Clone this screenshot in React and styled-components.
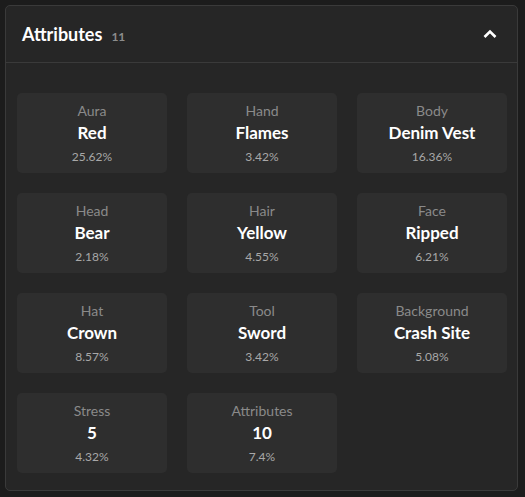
import styled, { createGlobalStyle } from "styled-components";

const GlobalStyle = createGlobalStyle`
  html, body {
    margin: 0;
    padding: 0;
    background: #1c1c1c;
    font-family: "Lato", "Noto Sans", sans-serif;
  }
`;

const Page = styled.div`
  padding: 5px 7px 4px 5px;
`;

const Panel = styled.section`
  background: #262626;
  border: 1px solid #3a3a3a;
  border-radius: 5px;
  height: 486px;
  box-sizing: border-box;
`;

const Header = styled.header`
  display: flex;
  align-items: center;
  justify-content: space-between;
  height: 56px;
  padding: 0 20px 0 16px;
  border-bottom: 1px solid #3a3a3a;
`;

const Title = styled.h2`
  margin: 0;
  display: flex;
  align-items: baseline;
  gap: 9px;
  font-size: 18px;
  font-weight: 700;
  color: #ffffff;
  margin-top: -1px;
`;

const Count = styled.span`
  font-size: 12px;
  font-weight: 700;
  color: #8c8c8c;
`;

const Toggle = styled.button`
  border: none;
  background: transparent;
  padding: 0;
  display: flex;
  cursor: pointer;
`;

const Grid = styled.div`
  display: grid;
  grid-template-columns: repeat(3, 150px);
  grid-auto-rows: 80px;
  gap: 20px;
  padding: 30px 11px 0;
`;

const Card = styled.div`
  background: #2e2e2e;
  border-radius: 5px;
  display: flex;
  flex-direction: column;
  align-items: center;
  padding-top: 9px;
  box-sizing: border-box;
`;

const Label = styled.span`
  font-size: 14px;
  color: #8a8a8a;
  line-height: 18px;
`;

const Value = styled.span`
  font-size: 17px;
  font-weight: 700;
  color: #ffffff;
  line-height: 26px;
`;

const Percent = styled.span`
  font-size: 12px;
  color: #a8a8a8;
  line-height: 18px;
  margin-top: 2px;
`;

const traits = [
  { type: "Aura", value: "Red", pct: "25.62%" },
  { type: "Hand", value: "Flames", pct: "3.42%" },
  { type: "Body", value: "Denim Vest", pct: "16.36%" },
  { type: "Head", value: "Bear", pct: "2.18%" },
  { type: "Hair", value: "Yellow", pct: "4.55%" },
  { type: "Face", value: "Ripped", pct: "6.21%" },
  { type: "Hat", value: "Crown", pct: "8.57%" },
  { type: "Tool", value: "Sword", pct: "3.42%" },
  { type: "Background", value: "Crash Site", pct: "5.08%" },
  { type: "Stress", value: "5", pct: "4.32%" },
  { type: "Attributes", value: "10", pct: "7.4%" },
];

const App = () => {
  return (
    <Page>
      <GlobalStyle />
      <Panel>
        <Header>
          <Title>
            Attributes <Count>{traits.length}</Count>
          </Title>
          <Toggle type="button" aria-label="collapse">
            <svg width="14" height="10" viewBox="0 0 14 10">
              <path
                d="M1.5 8 L7 2.5 L12.5 8"
                fill="none"
                stroke="#fff"
                strokeWidth="2.6"
              />
            </svg>
          </Toggle>
        </Header>
        <Grid>
          {traits.map((t) => (
            <Card key={t.type}>
              <Label>{t.type}</Label>
              <Value>{t.value}</Value>
              <Percent>{t.pct}</Percent>
            </Card>
          ))}
        </Grid>
      </Panel>
    </Page>
  );
};

export default App;
